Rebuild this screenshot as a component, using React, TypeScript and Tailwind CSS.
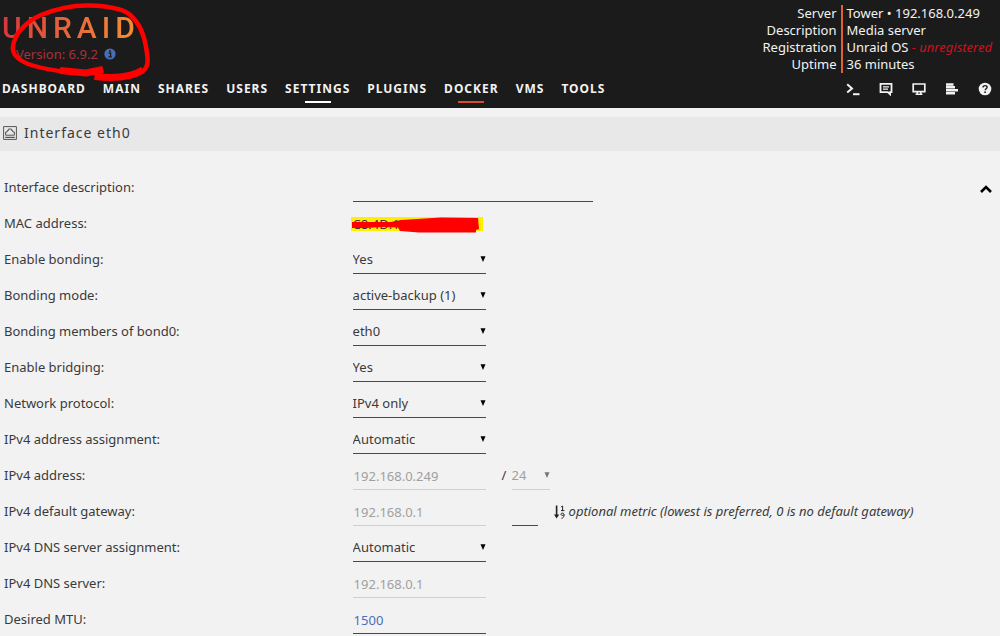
import { useState } from "react";
import type { ReactNode } from "react";

interface MenuItem {
  label: string;
  line?: "active" | "hover";
}

const MENU: MenuItem[] = [
  { label: "DASHBOARD" },
  { label: "MAIN" },
  { label: "SHARES" },
  { label: "USERS" },
  { label: "SETTINGS", line: "active" },
  { label: "PLUGINS" },
  { label: "DOCKER", line: "hover" },
  { label: "VMS" },
  { label: "TOOLS" },
];

const TOOLS: { name: string; icon: ReactNode }[] = [
  {
    name: "Terminal",
    icon: (
      <svg viewBox="0 0 14 14" className="size-3.5" fill="none" stroke="currentColor" strokeWidth="2">
        <path d="M1.2 2.2 6 6.4 1.2 10.6" />
        <path d="M7 12.2h6.5" />
      </svg>
    ),
  },
  {
    name: "Feedback",
    icon: (
      <svg viewBox="0 0 14 14" className="size-3.5" fill="none" stroke="currentColor">
        <path d="M1.5 1.9h11v8.2h-1.4v2.2L8.8 10.1H1.5z" strokeWidth="1.8" />
        <path d="M4 4.9h6M4 7.1h5" strokeWidth="1.2" />
      </svg>
    ),
  },
  {
    name: "Info",
    icon: (
      <svg viewBox="0 0 14 14" className="size-3.5" fill="none" stroke="currentColor">
        <path d="M1.2 2h11.6v7.6H1.2z" strokeWidth="1.7" />
        <path d="M5.2 9.8v2M8.8 9.8v2M3.6 12.2h6.8" strokeWidth="1.5" />
      </svg>
    ),
  },
  {
    name: "Log",
    icon: (
      <svg viewBox="0 0 14 14" className="size-3.5" fill="none" stroke="currentColor" strokeWidth="2.5">
        <path d="M1 2.4h7.5M1 5.3h9M1 8.3h12M1 11.2h9" />
      </svg>
    ),
  },
  {
    name: "Help",
    icon: (
      <svg viewBox="0 0 14 14" className="size-3.5">
        <circle cx="7" cy="7" r="6.3" fill="currentColor" />
        <path
          d="M5 5.6C5 4.3 5.9 3.6 7.1 3.6s2 .7 2 1.7c0 1.4-1.9 1.5-1.9 2.9"
          fill="none"
          stroke="#1c1b1b"
          strokeWidth="1.4"
        />
        <circle cx="7.1" cy="10.2" r="0.9" fill="#1c1b1b" />
      </svg>
    ),
  },
];

const SERVER_INFO: { label: string; value: ReactNode }[] = [
  { label: "Server", value: "Tower • 192.168.0.249" },
  { label: "Description", value: "Media server" },
  {
    label: "Registration",
    value: (
      <>
        Unraid OS <em className="text-[#d0101c]">- unregistered</em>
      </>
    ),
  },
  { label: "Uptime", value: "36 minutes" },
];

const Row = ({ id, label, children }: { id?: string; label: string; children: ReactNode }) => (
  <div className="flex h-9 items-center">
    {id ? (
      <label htmlFor={id} className="w-[35%] shrink-0">
        {label}
      </label>
    ) : (
      <span className="w-[35%] shrink-0">{label}</span>
    )}
    {children}
  </div>
);

interface SelectProps {
  id?: string;
  name?: string;
  options: string[];
  small?: boolean;
  disabled?: boolean;
}

const Select = ({ id, name, options, small, disabled }: SelectProps) => (
  <div
    className={`relative ${small ? "w-[38px]" : "w-[133px]"} ${
      disabled ? "text-[#a0a0a0]" : "text-[#3a3a3a]"
    }`}
  >
    <select
      id={id}
      aria-label={name}
      disabled={disabled}
      className={`block h-7 w-full appearance-none border-b bg-transparent opacity-100 outline-none ${
        disabled ? "border-[#cfcfcf]" : "border-[#4a4a4a]"
      }`}
    >
      {options.map((o) => (
        <option key={o}>{o}</option>
      ))}
    </select>
    <svg
      viewBox="0 0 6 6"
      className={`pointer-events-none absolute top-2.5 right-0 size-1.5 ${disabled ? "text-[#777]" : "text-black"}`}
    >
      <path d="M0.5 0.3h5L3 6z" fill="currentColor" />
    </svg>
  </div>
);

const Logo = () => (
  <div className="relative">
    <div className="w-fit bg-linear-to-r from-[#d8373c] to-[#f39035] bg-clip-text font-[Roboto] text-[30px] leading-8 font-medium tracking-[5px] text-transparent">
      UNRAID
    </div>
    <div className="flex items-center gap-1.5 pl-3.5 leading-5 text-[#a8323a]">
      Version: 6.9.2
      <svg viewBox="0 0 12 12" className="size-3">
        <circle cx="6" cy="6" r="5.6" fill="#486dba" />
        <path d="M4.7 5h1.9v3.6M4.4 8.9h3.4" fill="none" stroke="#1c1b1b" strokeWidth="1.3" />
        <circle cx="6" cy="2.9" r="0.95" fill="#1c1b1b" />
      </svg>
    </div>
    {/* marker around the version */}
    <svg
      viewBox="0 0 152 84"
      className="pointer-events-none absolute -top-3 -left-0.5 h-[84px] w-[152px]"
      fill="none"
      stroke="#fe0000"
      strokeLinejoin="round"
    >
      <path
        d="M103 69.500C98 71 92 73 86 73 68 73 42 69 28 64 17 59 12 54 13 46 15 34 25 22 41 15 58 8 74 5 90 5.500 108 6 122 9 129 14 140 23 144 34 146 47 148 58 149 66 144 70 134 77 118 79 95 77"
        strokeWidth="4.500"
      />
      <path d="M60 70.500 86 73 103 69.500" strokeWidth="7" />
      <path d="M94.500 76.500C116 79 132 77 143 70" strokeWidth="7" />
    </svg>
  </div>
);

export default function App() {
  const [open, setOpen] = useState(true);

  return (
    <div className="min-h-screen bg-[#f2f2f2] font-['Noto_Sans',sans-serif] text-[13px] text-[#3a3a3a]">
      <header className="bg-[#1c1b1b] text-[#f2f2f2]">
        <div className="flex h-[76px] items-start justify-between pr-2">
          <div className="pt-3 pl-0.5">
            <Logo />
          </div>
          <dl className="grid grid-cols-[auto_auto] pt-[5px] leading-[17px]">
            {SERVER_INFO.map((info) => (
              <div key={info.label} className="col-span-2 grid grid-cols-subgrid">
                <dt className="border-r-2 border-[#e0602f] pr-1 text-right">{info.label}</dt>
                <dd className="pl-1">{info.value}</dd>
              </div>
            ))}
          </dl>
        </div>
        <div className="flex h-8 items-start justify-between pr-2 pl-0.5">
          <nav className="flex gap-[17px] text-xs font-bold tracking-[1px]">
            {MENU.map((item) => (
              <a key={item.label} href="#" className="flex flex-col items-center gap-0.5 pt-[3px]">
                <span className="leading-5">{item.label}</span>
                {item.line && (
                  <span className={`h-0.5 w-[26px] ${item.line === "active" ? "bg-white" : "bg-[#d0502c]"}`} />
                )}
              </a>
            ))}
          </nav>
          <div className="flex gap-[19px] pt-1.5">
            {TOOLS.map((tool) => (
              <button key={tool.name} type="button" aria-label={tool.name}>
                {tool.icon}
              </button>
            ))}
          </div>
        </div>
      </header>

      <main className="pt-[9px]">
        <div className="flex h-[34px] items-center gap-[7px] bg-[#e8e8e8] pb-0.5 pl-[3px]">
          <svg viewBox="0 0 14 14" className="size-3.5" fill="none" stroke="#555">
            <path d="M0.6 0.6h12.8v12.8H0.6z" strokeWidth="1" />
            <path d="M2.6 9.2V6h1.6V4.4h1.4V3h2.8v1.4h1.4V6h1.6v3.2z" strokeWidth="1" />
            <path d="M2.2 11.4h9.6" strokeWidth="1.2" />
          </svg>
          <h1 className="text-sm tracking-[1px]">Interface eth0</h1>
        </div>

        <form className="relative pt-[19px] pl-1">
          <button
            type="button"
            aria-label="Toggle"
            onClick={() => setOpen(!open)}
            className="absolute top-8 right-2 text-black"
          >
            <svg viewBox="0 0 12 12" className="size-3" fill="none" stroke="currentColor" strokeWidth="2.6">
              <path d={open ? "M1 9 6 4l5 5" : "M1 4l5 5 5-5"} />
            </svg>
          </button>

          <Row id="description" label="Interface description:">
            <input
              id="description"
              type="text"
              className="h-7 w-60 border-b border-[#4a4a4a] bg-transparent outline-none"
            />
          </Row>
          {open && (
            <>
              <Row label="MAC address:">
                <span className="relative -ml-0.5 h-3.5 w-[132px] bg-[#ffee00] pl-0.5 leading-3.5">
                  C8:4D:1
                  <svg viewBox="0 0 132 16" className="absolute top-0 left-0 h-4 w-[132px]" fill="#fe0000">
                    <path d="M1 5 40 5 50 3 90 0.5 127 1 128 12 125 13 125 15.5 68 15.5 49 14 47 10.5 32 10 14 11 1 11z" />
                  </svg>
                </span>
              </Row>
              <Row id="bonding" label="Enable bonding:">
                <Select id="bonding" options={["Yes", "No"]} />
              </Row>
              <Row id="mode" label="Bonding mode:">
                <Select id="mode" options={["active-backup (1)"]} />
              </Row>
              <Row id="members" label="Bonding members of bond0:">
                <Select id="members" options={["eth0"]} />
              </Row>
              <Row id="bridging" label="Enable bridging:">
                <Select id="bridging" options={["Yes", "No"]} />
              </Row>
              <Row id="protocol" label="Network protocol:">
                <Select id="protocol" options={["IPv4 only"]} />
              </Row>
              <Row id="assignment" label="IPv4 address assignment:">
                <Select id="assignment" options={["Automatic", "Static"]} />
              </Row>
              <Row id="address" label="IPv4 address:">
                <input
                  id="address"
                  type="text"
                  disabled
                  defaultValue="192.168.0.249"
                  className="h-7 w-[133px] border-b border-[#cfcfcf] bg-transparent pl-px text-[#a0a0a0]"
                />
                <span className="w-[26px] pl-4">/</span>
                <Select name="Netmask" options={["24"]} small disabled />
              </Row>
              <Row id="gateway" label="IPv4 default gateway:">
                <input
                  id="gateway"
                  type="text"
                  disabled
                  defaultValue="192.168.0.1"
                  className="h-7 w-[133px] border-b border-[#cfcfcf] bg-transparent pl-px text-[#a0a0a0]"
                />
                <input
                  id="metric"
                  type="text"
                  className="ml-[26px] h-7 w-[26px] border-b border-[#4a4a4a] bg-transparent outline-none"
                />
                <label htmlFor="metric" className="flex items-center gap-1 pl-4 italic">
                  <svg viewBox="0 0 11 14" className="h-3.5 w-[11px]" fill="none" stroke="#222">
                    <path d="M2.6 0.5v11" strokeWidth="1.6" />
                    <path d="M0 9.6h5.2L2.6 13.5z" fill="#222" stroke="none" />
                    <path d="M7.2 1.8 8.6 1v4.6M7 5.6h3.4" strokeWidth="1" />
                    <path d="M10 9.6c0 1-3 1-3 0s.4-1.5 1.5-1.5 1.5.7 1.5 2-.6 3.2-2.6 3.2" strokeWidth="1" />
                  </svg>
                  optional metric (lowest is preferred, 0 is no default gateway)
                </label>
              </Row>
              <Row id="dns-assignment" label="IPv4 DNS server assignment:">
                <Select id="dns-assignment" options={["Automatic", "Static"]} />
              </Row>
              <Row id="dns" label="IPv4 DNS server:">
                <input
                  id="dns"
                  type="text"
                  disabled
                  defaultValue="192.168.0.1"
                  className="h-7 w-[133px] border-b border-[#cfcfcf] bg-transparent pl-px text-[#a0a0a0]"
                />
              </Row>
              <Row id="mtu" label="Desired MTU:">
                <input
                  id="mtu"
                  type="text"
                  defaultValue="1500"
                  className="h-7 w-[133px] border-b border-[#4a4a4a] bg-transparent pl-px text-[#486dba] outline-none"
                />
              </Row>
            </>
          )}
        </form>
      </main>
    </div>
  );
}
